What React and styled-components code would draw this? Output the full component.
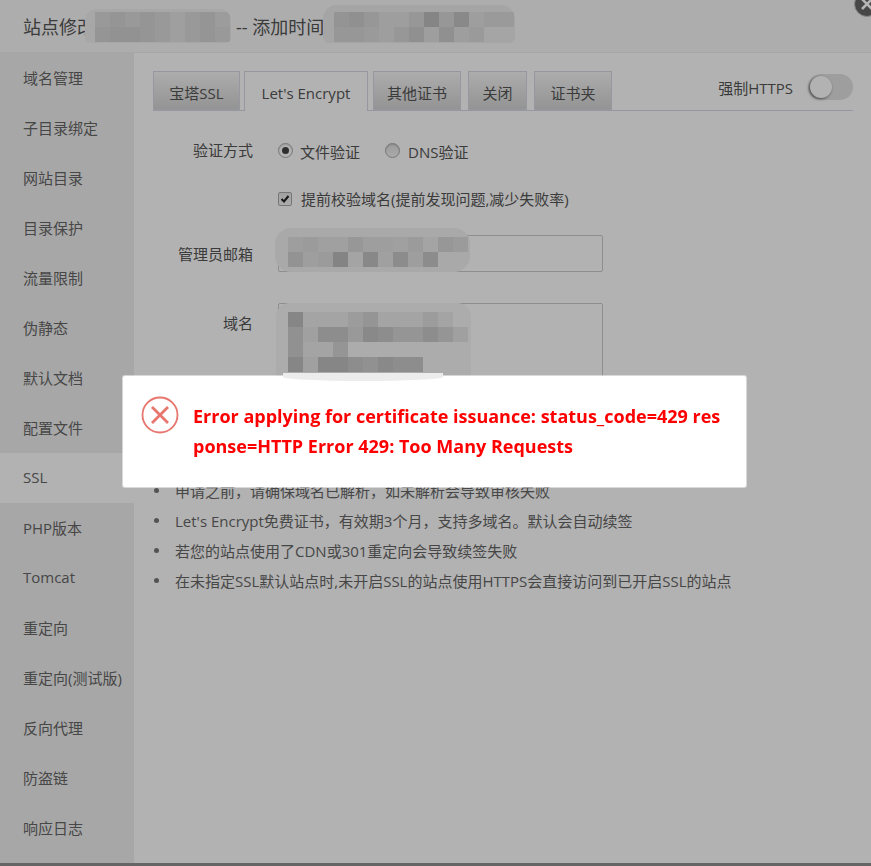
import React from 'react'
import styled, { createGlobalStyle } from 'styled-components'

const GlobalStyle = createGlobalStyle`
	html, body {
		margin: 0;
		padding: 0;
		height: 100%;
		overflow: hidden;
		background: #919191;
	}

	* {
		box-sizing: border-box;
	}
`

const Window = styled.div`
	width: 871px;
	height: 863px;
	background: #fff;
	font-family: 'Open Sans', 'Noto Sans CJK SC', sans-serif;
	color: #555;
	font-size: 15px;
	display: flex;
	flex-direction: column;
`

const Header = styled.div`
	height: 53px;
	flex: none;
	background: #f8f8f8;
	border-bottom: 1px solid #f0f0f0;
	padding-left: 23px;
	display: flex;
	align-items: center;
	font-size: 18px;
	color: #555;
	position: relative;
	white-space: pre;
`

const AddedAt = styled.span`
	margin-left: 141px;
`

const Body = styled.div`
	flex: 1;
	display: flex;
	min-height: 0;
`

const Sidebar = styled.div`
	width: 134px;
	flex: none;
	background: #f0f0f0;
`

const SideItem = styled.div`
	height: 50px;
	padding: 0 0 2px 23px;
	display: flex;
	align-items: center;
	background: ${(p) => (p.$active ? '#fff' : 'transparent')};
	color: #666;
`

const Main = styled.div`
	flex: 1;
	padding: 18px 18px 0 19px;
`

const TabBar = styled.div`
	height: 40px;
	display: flex;
	border-bottom: 1px solid #d9d9e6;
`

const Tab = styled.div`
	width: ${(p) => p.$width}px;
	height: ${(p) => (p.$active ? 40 : 39)}px;
	margin-left: ${(p) => p.$gap}px;
	border: 1px solid #d9d9e6;
	border-bottom: ${(p) => (p.$active ? 'none' : '1px solid #d9d9e6')};
	background: ${(p) => (p.$active ? '#fff' : 'linear-gradient(#f7f7f7, #d4d4d4)')};
	display: flex;
	align-items: center;
	justify-content: center;
	padding-top: 3px;
	color: #555;
`

const ForceHttps = styled.div`
	margin-left: auto;
	display: flex;
	align-items: center;
	gap: 15px;
	height: 26px;
	margin-top: 3px;
`

const Toggle = styled.div`
	width: 45px;
	height: 26px;
	border-radius: 13px;
	background: #e3e3e3;
	position: relative;

	&::after {
		content: '';
		position: absolute;
		left: 2px;
		top: 2px;
		width: 22px;
		height: 22px;
		border-radius: 50%;
		background: #fff;
		box-shadow: -1px 1px 3px rgba(0, 0, 0, 0.55);
	}
`

const FormRow = styled.div`
	display: flex;
	align-items: ${(p) => p.$align || 'center'};
	margin-top: ${(p) => p.$top}px;
`

const Label = styled.div`
	width: 100px;
	flex: none;
	text-align: right;
	color: #555;
	margin-top: ${(p) => p.$top || 0}px;
`

const Field = styled.div`
	margin-left: 25px;
	margin-top: ${(p) => p.$top || 0}px;
	display: flex;
	align-items: center;
`

const Radio = styled.span`
	width: 15px;
	height: 15px;
	margin-bottom: 2px;
	border-radius: 50%;
	border: 1px solid #aaa;
	background: ${(p) => (p.$checked ? '#fff' : 'linear-gradient(#e0e0e0, #f4f4f4)')};
	box-shadow: inset 0 1px 1px rgba(0, 0, 0, 0.15);
	display: flex;
	align-items: center;
	justify-content: center;
	flex: none;

	&::after {
		content: '';
		display: ${(p) => (p.$checked ? 'block' : 'none')};
		width: 7px;
		height: 7px;
		border-radius: 50%;
		background: #444;
	}
`

const OptionText = styled.span`
	margin-left: ${(p) => p.$left}px;
	margin-right: ${(p) => p.$gap || 0}px;
	color: #555;
`

const Check = styled.span`
	width: 14px;
	height: 14px;
	border-radius: 2px;
	border: 1px solid #aaa;
	background: linear-gradient(#e8e8e8, #f6f6f6);
	flex: none;
	display: flex;
	align-items: center;
	justify-content: center;
`

const Input = styled.div`
	width: 325px;
	height: ${(p) => p.$height}px;
	border: 1px solid #ccc;
	border-radius: 2px;
	background: #fff;
	position: relative;
`

const Mosaic = styled.div`
	position: absolute;
	left: ${(p) => p.$left}px;
	top: ${(p) => p.$top}px;
	width: ${(p) => p.$width}px;
	height: ${(p) => p.$height}px;
	background: ${(p) => p.$bg};
	border-radius: ${(p) => p.$radius};
	overflow: hidden;
	display: grid;
	grid-template-columns: repeat(auto-fill, 15px);
	grid-auto-rows: 15px;
	padding: ${(p) => p.$pad};
`

const MosaicCell = styled.span`
	opacity: ${(p) => p.$alpha};
	background: #8a8a8a;
`

const Tips = styled.ul`
	margin: 82px 0 0;
	padding: 0 0 0 1px;
	list-style: none;
	color: #666;
`

const Tip = styled.li`
	height: 30px;
	display: flex;
	align-items: center;
	white-space: nowrap;

	&::before {
		content: '';
		flex: none;
		width: 5px;
		height: 5px;
		border-radius: 50%;
		background: #777;
		margin-right: 16px;
	}
`

const Scrim = styled.div`
	position: fixed;
	inset: 0;
	background: rgba(0, 0, 0, 0.3);
`

const CloseDot = styled.svg`
	position: fixed;
	left: 854px;
	top: -9px;
	width: 26px;
	height: 26px;
`

const Toast = styled.div`
	position: fixed;
	left: 123px;
	top: 376px;
	width: 623px;
	height: 111px;
	background: #fff;
	border-radius: 2px;
	box-shadow: 0 0 0 1px rgba(255, 255, 255, 0.5);
	display: flex;
	padding: 25px 20px 0 18px;
`

const Smear = styled.div`
	position: absolute;
	left: 160px;
	top: -3px;
	width: 160px;
	height: 8px;
	background: #ececec;
	border-radius: 0 0 50% 50%;
`

const ToastIcon = styled.svg`
	width: 38px;
	height: 38px;
	flex: none;
	margin-top: -5px;
`

const ToastText = styled.div`
	margin-left: 14px;
	width: 530px;
	color: #f00;
	font-family: 'Open Sans', 'Noto Sans', sans-serif;
	font-weight: 700;
	font-size: 18px;
	line-height: 30px;
	word-break: break-all;
	position: relative;
`

const mosaicRow = (values) =>
	values.map((alpha, i) => <MosaicCell key={i} $alpha={alpha} />)

const items = ['域名管理', '子目录绑定', '网站目录', '目录保护', '流量限制', '伪静态', '默认文档', '配置文件', 'SSL', 'PHP版本', 'Tomcat', '重定向', '重定向(测试版)', '反向代理', '防盗链', '响应日志']

const tabs = [
	['宝塔SSL', 87, 0],
	["Let's Encrypt", 124, 4],
	['其他证书', 88, 5],
	['关闭', 59, 7],
	['证书夹', 78, 7],
]

const tips = [
	'申请之前，请确保域名已解析，如未解析会导致审核失败',
	"Let's Encrypt免费证书，有效期3个月，支持多域名。默认会自动续签",
	'若您的站点使用了CDN或301重定向会导致续签失败',
	'在未指定SSL默认站点时,未开启SSL的站点使用HTTPS会直接访问到已开启SSL的站点',
]

const App = () => (
	<>
		<GlobalStyle />
		<Window>
			<Header>
				<span>站点修改</span>
				<Mosaic $left={85} $top={9} $width={146} $height={34} $bg="#efefef" $radius="12px 12px 5px 5px" $pad="3px 0 0 10px">
					{mosaicRow([0.2, 0.25, 0.2, 0.25, 0.2, 0.1, 0.2, 0.25, 0.15])}
					{mosaicRow([0.25, 0.3, 0.3, 0.25, 0.2, 0.1, 0.2, 0.25, 0.2])}
				</Mosaic>
				<AddedAt>-- 添加时间</AddedAt>
				<Mosaic $left={323} $top={5} $width={192} $height={38} $bg="#ececec" $radius="14px 14px 6px 6px" $pad="7px 0 0 11px">
					{mosaicRow([0.25, 0.3, 0.2, 0.1, 0.1, 0.2, 0.45, 0.2, 0.4, 0.1, 0.15])}
					{mosaicRow([0.15, 0.2, 0.2, 0.15, 0.1, 0.2, 0.3, 0.1, 0.3, 0.1, 0.15])}
				</Mosaic>
			</Header>
			<Body>
				<Sidebar>
					{items.map((item) => (
						<SideItem key={item} $active={item === 'SSL'}>{item}</SideItem>
					))}
				</Sidebar>
				<Main>
					<TabBar>
						{tabs.map(([name, width, gap]) => (
							<Tab key={name} $width={width} $gap={gap} $active={name === "Let's Encrypt"}>{name}</Tab>
						))}
						<ForceHttps>
							强制HTTPS
							<Toggle />
						</ForceHttps>
					</TabBar>
					<FormRow $top={28} $align="flex-start">
						<Label>验证方式</Label>
						<Field $top={2}>
							<Radio $checked />
							<OptionText $left={7} $gap={25}>文件验证</OptionText>
							<Radio />
							<OptionText $left={8}>DNS验证</OptionText>
						</Field>
					</FormRow>
					<FormRow $top={26}>
						<Label />
						<Field>
							<Check>
								<svg width="10" height="10" viewBox="0 0 10 10">
									<path d="M1.5 5 L4 7.5 L8.5 2" fill="none" stroke="#222" strokeWidth="2" />
								</svg>
							</Check>
							<OptionText $left={9}>提前校验域名(提前发现问题,减少失败率)</OptionText>
						</Field>
					</FormRow>
					<FormRow $top={26}>
						<Label>管理员邮箱</Label>
						<Field>
							<Input $height={37}>
								<Mosaic $left={-4} $top={-8} $width={195} $height={44} $bg="#f3f3f3" $radius="16px" $pad="9px 0 0 13px">
									{mosaicRow([0.15, 0.2, 0.12, 0.12, 0.25, 0.15, 0.15, 0.12, 0.2, 0.08, 0.25])}
									{mosaicRow([0.2, 0.3, 0.15, 0.2, 0.5, 0.08, 0.45, 0.12, 0.4, 0.15, 0.4])}
								</Mosaic>
							</Input>
						</Field>
					</FormRow>
					<FormRow $top={31} $align="flex-start">
						<Label $top={9}>域名</Label>
						<Field>
							<Input $height={90}>
								<Mosaic $left={-3} $top={-1} $width={195} $height={82} $bg="#f6f6f6" $radius="14px" $pad="9px 0 0 12px">
									{mosaicRow([0.5, 0.1, 0.1, 0.1, 0.2, 0.3, 0.1, 0.1, 0.1, 0.2, 0.1, 0])}
									{mosaicRow([0.35, 0.15, 0.4, 0.4, 0.25, 0.45, 0.4, 0.3, 0.3, 0.4, 0.3, 0.15])}
									{mosaicRow([0.35, 0.1, 0.1, 0.3, 0, 0, 0, 0, 0, 0, 0, 0])}
									{mosaicRow([0.5, 0.15, 0.5, 0.5, 0.4, 0.35, 0.45, 0.4, 0.4, 0, 0, 0])}
								</Mosaic>
							</Input>
						</Field>
					</FormRow>
					<Tips>
						{tips.map((tip) => (
							<Tip key={tip}>{tip}</Tip>
						))}
					</Tips>
				</Main>
			</Body>
		</Window>
		<Scrim />
		<CloseDot viewBox="0 0 26 26">
			<circle cx="13" cy="13" r="12.5" fill="#474747" stroke="#8a8a8a" strokeWidth="1" />
			<path d="M8 8 L18 18 M18 8 L8 18" stroke="#b5b5b5" strokeWidth="2.5" fill="none" />
		</CloseDot>
		<Toast>
			<Smear />
			<ToastIcon viewBox="0 0 38 38">
				<circle cx="19" cy="19" r="17.5" fill="none" stroke="#e8756e" strokeWidth="1.8" />
				<path d="M11 11 L27 27 M27 11 L11 27" fill="none" stroke="#e8756e" strokeWidth="2.8" />
			</ToastIcon>
			<ToastText>Error applying for certificate issuance: status_code=429 response=HTTP Error 429: Too Many Requests</ToastText>
		</Toast>
	</>
)

export default App
